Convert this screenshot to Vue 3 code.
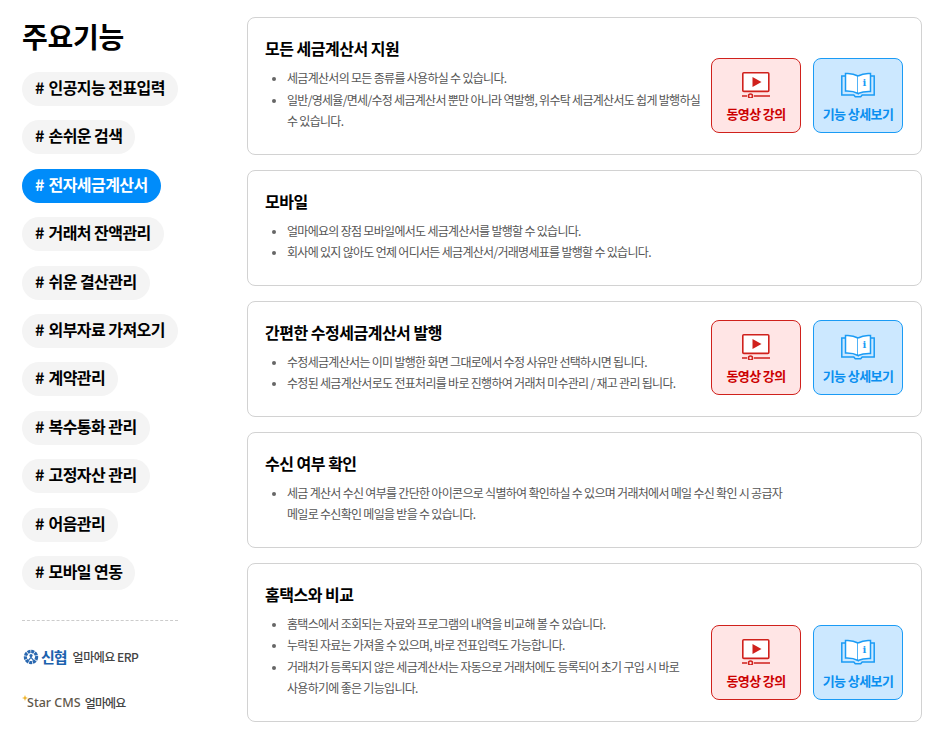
<script setup>
const tags = [
  '인공지능 전표입력',
  '손쉬운 검색',
  '전자세금계산서',
  '거래처 잔액관리',
  '쉬운 결산관리',
  '외부자료 가져오기',
  '계약관리',
  '복수통화 관리',
  '고정자산 관리',
  '어음관리',
  '모바일 연동',
]

const cards = [
  {
    title: '모든 세금계산서 지원',
    items: [
      '세금계산서의 모든 종류를 사용하실 수 있습니다.',
      '일반/영세율/면세/수정 세금계산서 뿐만 아니라 역발행, 위수탁 세금계산서도 쉽게 발행하실 수 있습니다.',
    ],
    actions: true,
  },
  {
    title: '모바일',
    items: [
      '얼마에요의 장점 모바일에서도 세금계산서를 발행할 수 있습니다.',
      '회사에 있지 않아도 언제 어디서든 세금계산서/거래명세표를 발행할 수 있습니다.',
    ],
  },
  {
    title: '간편한 수정세금계산서 발행',
    items: [
      '수정세금계산서는 이미 발행한 화면 그대로에서 수정 사유만 선택하시면 됩니다.',
      '수정된 세금계산서로도 전표처리를 바로 진행하여 거래처 미수관리 / 재고 관리 됩니다.',
    ],
    actions: true,
  },
  {
    title: '수신 여부 확인',
    items: [
      '세금 계산서 수신 여부를 간단한 아이콘으로 식별하여 확인하실 수 있으며 거래처에서 메일 수신 확인 시 공급자 메일로 수신확인 메일을 받을 수 있습니다.',
    ],
  },
  {
    title: '홈택스와 비교',
    items: [
      '홈택스에서 조회되는 자료와 프로그램의 내역을 비교해 볼 수 있습니다.',
      '누락된 자료는 가져올 수 있으며, 바로 전표입력도 가능합니다.',
      '거래처가 등록되지 않은 세금계산서는 자동으로 거래처에도 등록되어 초기 구입 시 바로 사용하기에 좋은 기능입니다.',
    ],
    actions: true,
  },
]
</script>

<template>
  <div class="page">
    <aside class="side">
      <h1 class="side-title">주요기능</h1>
      <ul class="tags">
        <li v-for="tag in tags" :key="tag" class="tag" :class="{ active: tag === '전자세금계산서' }"><span class="hash">#</span> {{ tag }}</li>
      </ul>
      <div class="logos">
        <div class="logo">
          <svg class="logo-mark" width="16" height="16" viewBox="0 0 16 16">
            <circle cx="8" cy="8" r="5.600" fill="none" stroke="#2a68b0" stroke-width="3.200" stroke-dasharray="3 0.700" />
            <circle cx="8" cy="6.600" r="1.600" fill="#2a68b0" />
            <path d="M5.400 11.400 8 8.400l2.600 3" fill="none" stroke="#2a68b0" stroke-width="1.200" />
          </svg>
          <span class="logo-shinhyup">신협</span>
          <span class="logo-name">얼마에요 ERP</span>
        </div>
        <div class="logo star">
          <svg class="logo-star" width="6" height="6" viewBox="0 0 10 10">
            <path d="M5 0l1.400 3.600L10 5 6.400 6.400 5 10 3.600 6.400 0 5l3.600-1.400z" fill="#f0b429" />
          </svg>
          <span class="logo-cms">Star CMS</span>
          <span class="logo-name small">얼마에요</span>
        </div>
      </div>
    </aside>

    <main class="main">
      <section v-for="card in cards" :key="card.title" class="card">
        <div class="card-body" :class="{ narrow: card.actions }">
          <h2 class="card-title">{{ card.title }}</h2>
          <ul class="card-list">
            <li v-for="item in card.items" :key="item">{{ item }}</li>
          </ul>
        </div>
        <div v-if="card.actions" class="actions">
          <a class="action video">
            <svg width="28" height="26" viewBox="0 0 28 26" fill="none" stroke="#d0211c" stroke-width="1.600">
              <rect x="0.800" y="0.800" width="26" height="18.600" rx="1" fill="#fff" />
              <path d="M10.500 5v10l9-5z" fill="#d0211c" stroke="none" />
              <path d="M0 24h5M12 24h16" />
              <circle cx="8.500" cy="24" r="2" />
            </svg>
            <span>동영상 강의</span>
          </a>
          <a class="action detail">
            <svg width="34" height="26" viewBox="0 0 34 26" fill="none" stroke="#1a9bf5" stroke-width="1.500">
              <path d="M4 4H.8v19h12l1.500 1.800h5.400l1.500-1.800h12V4H30" />
              <path d="M4.500 1.500c5-.5 9 .5 12.500 2.500v17.500c-3.500-2-7.500-2.700-12.500-2.500z" fill="#fff" />
              <path d="M17 4c3.500-2 7.500-3 12.500-2.500v18c-5-.2-9 .5-12.500 2" fill="#fff" />
              <text x="23" y="14" text-anchor="middle" class="book-i">i</text>
            </svg>
            <span>기능 상세보기</span>
          </a>
        </div>
      </section>
    </main>
  </div>
</template>

<style>
body {
  background: #fff;
}
</style>

<style scoped>
.page {
  display: flex;
  align-items: flex-start;
  padding: 17px 11px 0 22px;
  font-family: "Noto Sans CJK KR", "Noto Sans", sans-serif;
  color: #000;
}

.side {
  width: 156px;
  margin-right: 69px;
  flex-shrink: 0;
}

.side-title {
  margin: 0;
  font-size: 28px;
  line-height: 38px;
  font-weight: 700;
  letter-spacing: -0.250px;
}

.tags {
  list-style: none;
  margin: 0;
  padding: 0;
  margin-top: 17px;
  display: flex;
  flex-direction: column;
  align-items: flex-start;
  gap: 14.400px;
}

.tag {
  height: 34px;
  line-height: 31px;
  padding: 0 13px;
  border-radius: 17px;
  background: #f4f4f4;
  font-size: 16px;
  font-weight: 700;
  letter-spacing: -0.550px;
  white-space: nowrap;
}

.hash {
  margin-right: 1.500px;
}

.tag.active {
  background: #008cfa;
  color: #fff;
}

.logos {
  margin-top: 30px;
  border-top: 1px dashed #ccc;
}

.logo {
  display: flex;
  align-items: center;
  margin-top: 27px;
  height: 18px;
}

.logo-mark {
  margin: 0 2px 0 1px;
}

.logo-shinhyup {
  color: #1c62ae;
  font-size: 15px;
  font-weight: 700;
  letter-spacing: -1px;
  margin-right: 6px;
}

.logo-name {
  font-size: 12px;
  font-weight: 500;
  color: #444;
  letter-spacing: -0.500px;
}

.logo-name.small {
  font-size: 12px;
  margin-left: 4px;
  letter-spacing: -0.800px;
}

.logo.star {
  margin-top: 28px;
  position: relative;
}

.logo-star {
  position: absolute;
  left: 0;
  top: 1px;
}

.logo-cms {
  margin-left: 5px;
  font-family: "Noto Sans", sans-serif;
  font-size: 12.500px;
  font-weight: 500;
  color: #5f574a;
}

.main {
  flex: 1;
  display: flex;
  flex-direction: column;
  gap: 15px;
}

.card {
  display: flex;
  align-items: flex-end;
  padding: 18px 18px 20.800px 17px;
  border: 1px solid #d2d2d2;
  border-radius: 8px;
  box-sizing: border-box;
}

.card-body {
  flex: 1;
  min-width: 0;
  align-self: flex-start;
  padding-right: 103px;
  padding-bottom: 1px;
}

.card-body.narrow {
  padding-right: 8px;
}

.card-title {
  margin: 0 0 7px;
  font-size: 16px;
  line-height: 24px;
  font-weight: 700;
  letter-spacing: -0.500px;
}

.card-list {
  margin: 0;
  padding: 0 0 0 22px;
  font-size: 12px;
  line-height: 21.600px;
  color: #555;
  letter-spacing: -0.700px;
  word-break: keep-all;
}

.card-list li::marker {
  font-size: 10px;
  color: #666;
}

.actions {
  display: flex;
  gap: 12px;
  flex-shrink: 0;
}

.action {
  width: 90px;
  height: 75px;
  box-sizing: border-box;
  border: 1px solid;
  border-radius: 8px;
  display: flex;
  flex-direction: column;
  align-items: center;
  justify-content: flex-end;
  gap: 7px;
  padding-bottom: 9px;
  font-size: 13px;
  line-height: 18px;
  font-weight: 700;
  letter-spacing: -0.600px;
}

.action.video {
  background: #ffe5e5;
  border-color: #d0211c;
  color: #cc0000;
}

.action.detail {
  background: #cce8ff;
  border-color: #1a9bf5;
  color: #0a8ff0;
}

.book-i {
  font-family: "DejaVu Serif", serif;
  font-size: 10px;
  font-weight: 700;
  fill: #1a9bf5;
  stroke: none;
}
</style>
